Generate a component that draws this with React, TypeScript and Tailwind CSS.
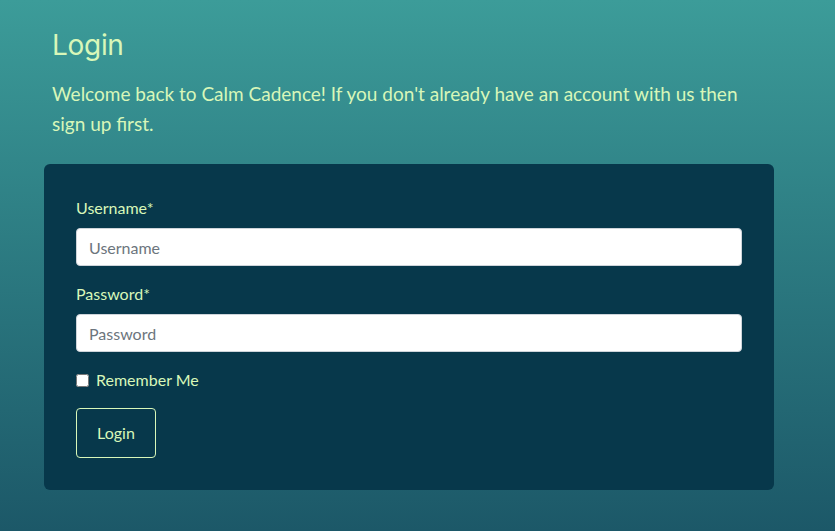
export default function App() {
  return (
    <div
      className="min-h-[531px] w-full bg-gradient-to-b from-[#3c9c99] to-[#1c5868] px-[44px] pt-[26px] pb-[41px] text-[#d8f7b9]"
      style={{ fontFamily: 'Lato, "Open Sans", sans-serif' }}
    >
      <h1 className="px-2 text-[28px] leading-[38px] font-normal" style={{ fontFamily: 'Inter, Lato, sans-serif', letterSpacing: '-0.3px' }}>
        Login
      </h1>
      <p className="mt-[15px] w-[716px] px-2 text-[19px] leading-[30px]">
        Welcome back to Calm Cadence! If you don't already have an account with us then sign up first.
      </p>

      <form className="mt-[25px] w-[730px] rounded-md bg-[#07384b] px-8 pt-[32px] pb-[32px]">
        <label className="block text-base leading-6" htmlFor="username">
          Username*
        </label>
        <input
          id="username"
          placeholder="Username"
          className="mt-2 block h-[38px] w-full rounded border border-[#ced4da] bg-white px-3 text-base text-[#212529] placeholder:text-[#6c757d] outline-none"
        />
        <label className="mt-4 block text-base leading-6" htmlFor="password">
          Password*
        </label>
        <input
          id="password"
          type="password"
          placeholder="Password"
          className="mt-2 block h-[38px] w-full rounded border border-[#ced4da] bg-white px-3 text-base text-[#212529] placeholder:text-[#6c757d] outline-none"
        />
        <div className="mt-4 flex items-center gap-[7px]">
          <input type="checkbox" id="remember" className="m-0 h-[13px] w-[13px]" />
          <label htmlFor="remember" className="text-base leading-6">
            Remember Me
          </label>
        </div>
        <button
          type="button"
          className="mt-4 h-[50px] w-[80px] rounded border border-[#d8f7b9] text-base text-[#d8f7b9]"
        >
          Login
        </button>
      </form>
    </div>
  );
}
